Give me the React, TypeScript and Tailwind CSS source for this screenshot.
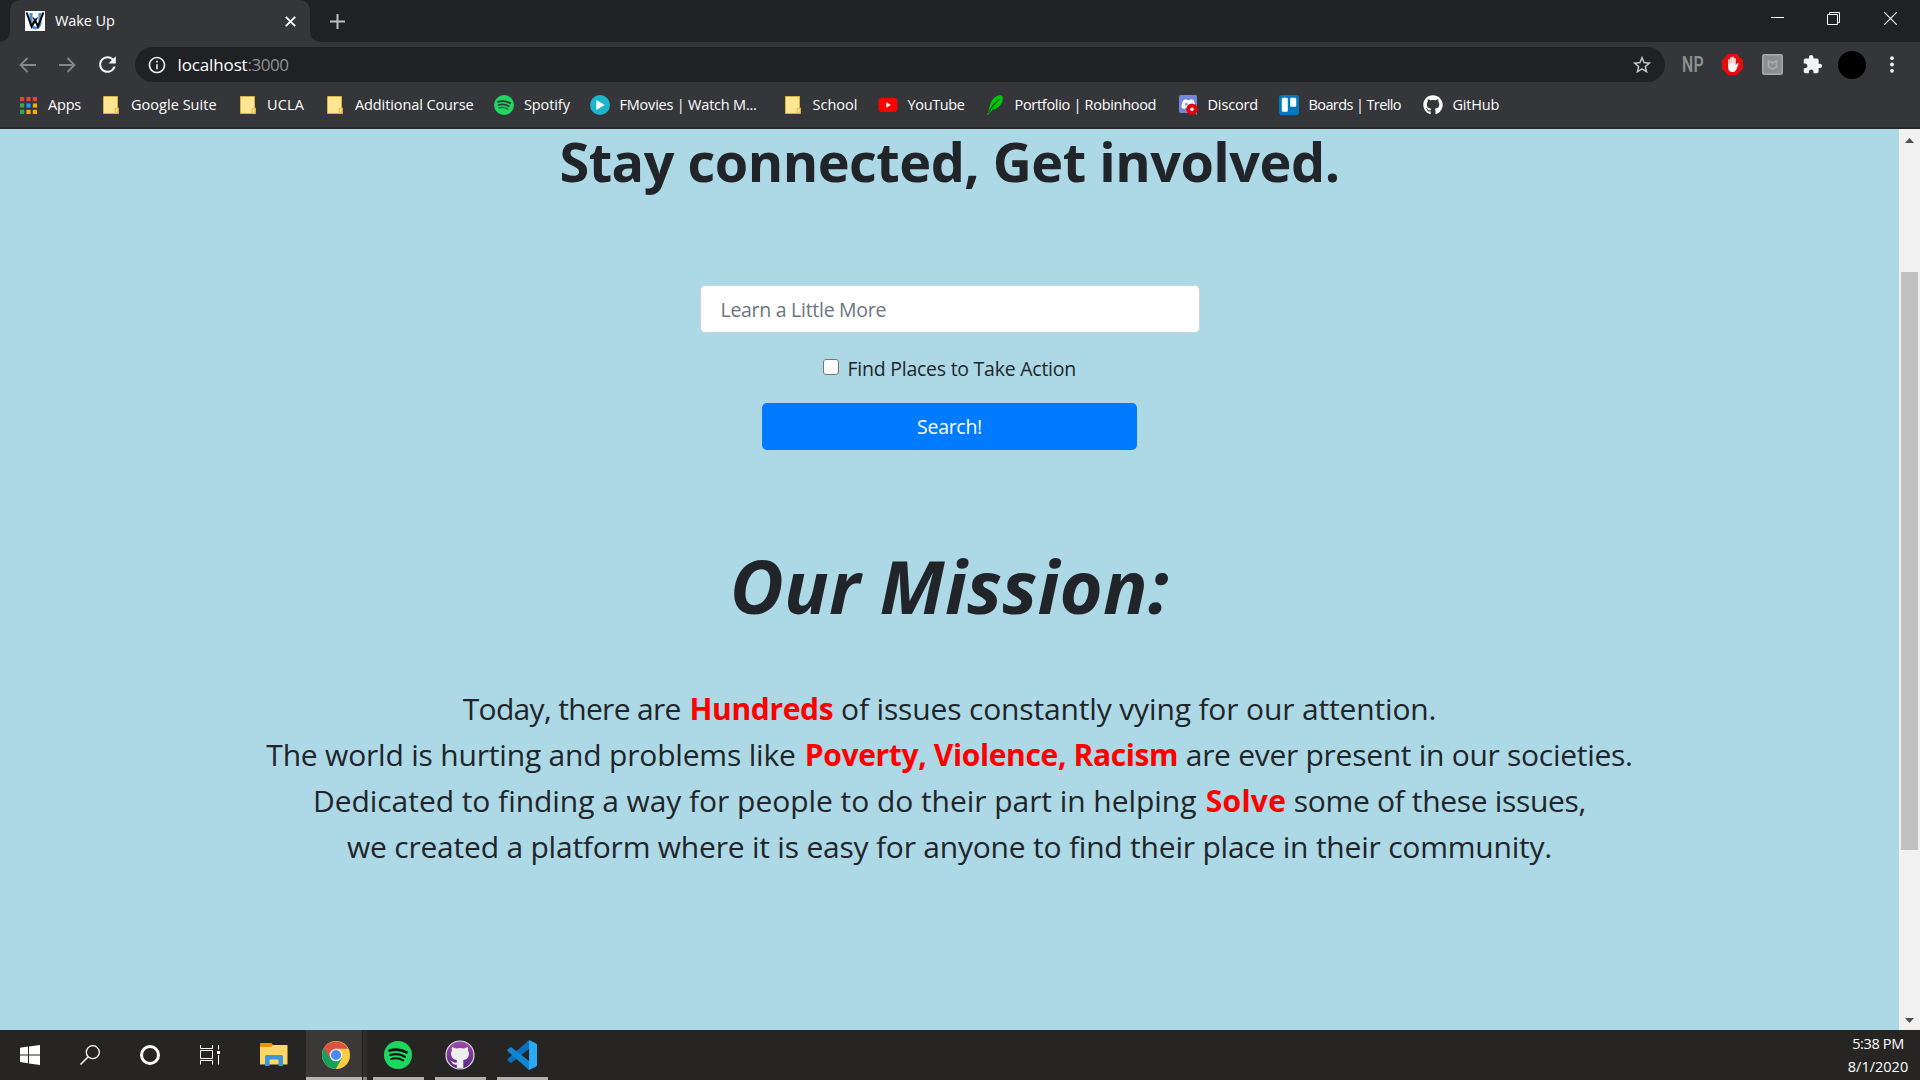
import React from 'react';
import { FaGithub } from 'react-icons/fa';
import { MdExtension, MdInfoOutline, MdRefresh, MdStarBorder } from 'react-icons/md';

function FolderIcon() {
  return (
    <svg width="16" height="18" viewBox="0 0 16 18">
      <path d="M.5.5h14v11.5h1v5.5H.5z" fill="#ffe693" stroke="#d9b23e" />
      <path d="M12.2 17.2v-4.4l2.8-1v5.4z" fill="#ffe693" stroke="#d9b23e" strokeWidth=".9" />
    </svg>
  );
}

function AppsIcon() {
  const colors = ['#ea4335', '#ea4335', '#ea4335', '#34a853', '#2196f3', '#f9ab00', '#34a853', '#f9ab00', '#f9ab00'];
  return (
    <svg width="17" height="17" viewBox="0 0 17 17">
      {colors.map((c, i) => (
        <rect key={i} x={(i % 3) * 6.4} y={Math.floor(i / 3) * 6.4} width="4.2" height="4.2" fill={c} />
      ))}
    </svg>
  );
}

function SpotifyIcon({ size, ink }: { size: number; ink: string }) {
  return (
    <svg width={size} height={size} viewBox="0 0 28 28">
      <circle cx="14" cy="14" r="14" fill="#1ed760" />
      <g fill="none" stroke={ink} strokeLinecap="round">
        <path d="M5.6 9.6c5.4-1.6 12-1.1 17 1.8" strokeWidth="2.6" />
        <path d="M6.4 14c4.8-1.4 10.3-.8 14.5 1.7" strokeWidth="2.2" />
        <path d="M7.1 18c4-1.2 8.7-.7 12.2 1.5" strokeWidth="1.8" />
      </g>
    </svg>
  );
}

function PlayIcon() {
  return (
    <svg width="20" height="20" viewBox="0 0 20 20">
      <circle cx="10" cy="10" r="10" fill="#1cb5cc" />
      <path d="M6.3 5v10l8.4-5z" fill="#fff" />
    </svg>
  );
}

function YouTubeIcon() {
  return (
    <svg width="20" height="14" viewBox="0 0 20 14">
      <rect x=".5" width="19" height="14" rx="3.4" fill="#f00" />
      <path d="M8.3 4.3v5.4L12.8 7z" fill="#fff" />
    </svg>
  );
}

function LeafIcon() {
  return (
    <svg width="17" height="20" viewBox="0 0 17 20">
      <path d="M2.500 12.500C3 8 5.500 3.500 9.500 1.200 11.500.1 14 0 15.300.9c.8 1.600.6 4.600-.8 7.100-1.700 3.500-4.500 5.700-9 6.700L1.200 19.800l-.9-.1z" fill="#00c805" />
      <path d="M1.500 18C4.500 12 8 7.500 12.500 4.300" stroke="#1f4f2a" strokeWidth="1.300" fill="none" />
    </svg>
  );
}

function DiscordIcon() {
  return (
    <svg width="20" height="20" viewBox="0 0 20 20">
      <path d="M2 0h14.500A1.500 1.500 0 0 1 18 1.500V20l-3-2H2a2 2 0 0 1-2-2V2a2 2 0 0 1 2-2z" fill="#7289da" />
      <path d="M4.500 5.200C6 4.300 7 4.200 7.600 4.200l.4.7h3l.4-.7c1.100.1 2.200.4 3.200 1.100 1.200 2.300 1.700 4.700 1.600 7.300-1.200 1.100-2.300 1.400-3.400 1.400l-.7-1H6.400l-.7 1c-1.300-.1-2.400-.6-3.300-1.400 0-2.600.6-5.100 2.100-7.400z" fill="#fff" />
      <circle cx="7.200" cy="9.200" r="1.200" fill="#7289da" />
      <circle cx="13" cy="14.200" r="5.800" fill="#e30613" />
      <circle cx="13" cy="14.200" r="1.700" fill="#fff" />
    </svg>
  );
}

function TrelloIcon() {
  return (
    <svg width="20" height="20" viewBox="0 0 20 20">
      <rect width="20" height="20" rx="2.8" fill="#0079bf" />
      <rect x="2.8" y="2.8" width="6" height="14" rx="1.2" fill="#fff" />
      <rect x="11.2" y="2.8" width="6" height="9" rx="1.2" fill="#fff" />
    </svg>
  );
}

function Favicon() {
  return (
    <svg width="20" height="20" viewBox="0 0 20 20">
      <path d="M0 0h20v20H0z" fill="#fff" />
      <path d="M6 2v10a4.500 5 0 0 0 9 0V2" fill="none" stroke="#4a8fd0" strokeWidth="3.200" />
      <path d="M1.600 1.500l5 14L10 9l3 6.500 5.400-14" fill="none" stroke="#0a0a0a" strokeWidth="2" />
      <path d="M8 6.500l5 8M12.500 6.500l-5 8" stroke="#0a0a0a" strokeWidth="1.200" />
    </svg>
  );
}

const bookmarks: { label: string; icon: React.ReactNode; box: string; pad: string; track: string }[] = [
  { label: 'Apps', icon: <AppsIcon />, box: 'w-[83px]', pad: 'w-[28px]', track: 'tracking-[-0.2px]' },
  { label: 'Google Suite', icon: <FolderIcon />, box: 'w-[137px]', pad: 'w-[28px]', track: 'tracking-[0.03px]' },
  { label: 'UCLA', icon: <FolderIcon />, box: 'w-[87px]', pad: 'w-[27px]', track: 'tracking-[0.15px]' },
  { label: 'Additional Course', icon: <FolderIcon />, box: 'w-[167px]', pad: 'w-[28px]', track: 'tracking-[-0.1px]' },
  { label: 'Spotify', icon: <SpotifyIcon size={20} ink="#35363a" />, box: 'w-[96px]', pad: 'w-[30px]', track: 'tracking-[-0.1px]' },
  { label: 'FMovies | Watch M...', icon: <PlayIcon />, box: 'w-[195px]', pad: 'w-[29.5px]', track: 'tracking-[-0.21px]' },
  { label: 'School', icon: <FolderIcon />, box: 'w-[93px]', pad: 'w-[27.5px]', track: 'tracking-[0.02px]' },
  { label: 'YouTube', icon: <YouTubeIcon />, box: 'w-[109px]', pad: 'w-[29.5px]', track: 'tracking-[-0.35px]' },
  { label: 'Portfolio | Robinhood', icon: <LeafIcon />, box: 'w-[192px]', pad: 'w-[27.5px]', track: 'tracking-[-0.3px]' },
  { label: 'Discord', icon: <DiscordIcon />, box: 'w-[100px]', pad: 'w-[28.5px]', track: 'tracking-[-0.15px]' },
  { label: 'Boards | Trello', icon: <TrelloIcon />, box: 'w-[144px]', pad: 'w-[29.5px]', track: 'tracking-[-0.6px]' },
  { label: 'GitHub', icon: <FaGithub size={20} color="#fff" />, box: 'w-[90px]', pad: 'w-[29.5px]', track: 'tracking-[-0.2px]' },
];

function TabStrip() {
  return (
    <div className="flex h-[42px] bg-[#202124]">
      <div className="flex w-[10px] items-end bg-[#35363a]">
        <div className="h-[42px] w-[10px] rounded-br-[10px] bg-[#202124]" />
      </div>
      <div className="flex w-[300px] items-center rounded-t-[10px] bg-[#35363a] pr-[14px] pl-[15px]">
        <Favicon />
        <span className="ml-[10px] flex-1 text-[14.5px] tracking-[-0.1px] text-white">Wake Up</span>
        <svg width="11" height="11" viewBox="0 0 11 11">
          <path d="M.8.8l9.400 9.400M10.200.8L.8 10.200" stroke="#fff" strokeWidth="1.900" />
        </svg>
      </div>
      <div className="flex w-[10px] items-end bg-[#35363a]">
        <div className="h-[42px] w-[10px] rounded-bl-[10px] bg-[#202124]" />
      </div>
      <div className="flex flex-1 items-center pl-[10px]">
        <svg width="15" height="15" viewBox="0 0 15 15">
          <path d="M7.5 0v15M0 7.5h15" stroke="#bfc0c3" strokeWidth="2" />
        </svg>
      </div>
      <div className="flex">
        <div className="flex w-[57px] justify-center pt-[17px]">
          <div className="h-px w-[13px] bg-white" />
        </div>
        <div className="flex w-[55px] justify-center pt-[12px]">
          <svg width="13" height="13" viewBox="0 0 13 13" fill="none" stroke="#fff">
            <path d="M.5 2.5h10v10H.5zM2.5 2.5v-2h10v10h-2" />
          </svg>
        </div>
        <div className="flex w-[59px] justify-center pt-[12px]">
          <svg width="13" height="13" viewBox="0 0 13 13" fill="none" stroke="#fff" strokeWidth="1.1">
            <path d="M.3.3l12.4 12.4M12.7.3L.3 12.7" />
          </svg>
        </div>
      </div>
    </div>
  );
}

function Toolbar() {
  return (
    <div className="flex h-[45px] items-center bg-[#35363a]">
      <div className="flex w-[135px] items-center pl-[19px]">
        <svg width="17" height="16" viewBox="0 0 17 16" fill="none" stroke="#86878a" strokeWidth="1.8">
          <path d="M17 8H2M8.5 1L1.5 8l7 7" />
        </svg>
        <svg className="ml-[23px]" width="17" height="16" viewBox="0 0 17 16" fill="none" stroke="#86878a" strokeWidth="1.8">
          <path d="M0 8h15M8.5 1l7 7-7 7" />
        </svg>
        <MdRefresh className="ml-[19px]" size={25} color="#f1f3f4" />
      </div>
      <div className="flex h-[35px] w-[1530px] items-center rounded-full bg-[#202124] pr-[12px] pl-[12px]">
        <MdInfoOutline size={20} color="#e8eaed" />
        <span className="ml-[10.5px] flex-1 text-[17px] text-white">
          <span className="tracking-[-0.13px]">localhost</span>
          <span className="tracking-[-0.5px] text-[#8e9195]">:3000</span>
        </span>
        <MdStarBorder size={22} color="#c9cacd" />
      </div>
      <div className="flex flex-1 items-center pl-[16.5px]">
        <span className="w-[20px] origin-left scale-x-[0.72] font-['Roboto'] text-[22px] leading-none font-semibold tracking-[0.5px] text-[#8d8e90]">NP</span>
        <svg className="ml-[20px]" width="21" height="21" viewBox="0 0 21 21">
          <path d="M6.2 0h8.6L21 6.2v8.6L14.8 21H6.2L0 14.8V6.2z" fill="#e40d0d" />
          <path d="M6.2 5.500q.8-.8 1.400.1v4.200h.5V3.500q.8-1 1.600 0v6h.4V3q.9-1 1.700 0v6.700h.4V4.400q.8-.9 1.500 0v7l1.300-2q1-.8 1.700.2l-2.400 5.800q-1 2.600-3.600 2.600c-3 0-4.500-1.500-4.500-4.500z" fill="#fff" />
        </svg>
        <svg className="ml-[19px]" width="21" height="21" viewBox="0 0 21 21">
          <rect x=".8" y=".8" width="19.4" height="19.4" rx="1.5" fill="#8c8d8f" stroke="#a7adb1" strokeWidth="1.5" />
          <path d="M6.500 7l4 1.800 4-1.800v6l-4 2-4-2z" fill="none" stroke="#a3acb4" strokeWidth="1.700" />
        </svg>
        <MdExtension className="ml-[19px]" size={21} color="#f1f3f4" />
        <div className="ml-[15px] h-[28px] w-[28px] rounded-full bg-black" />
        <svg className="ml-[24px]" width="4" height="17" viewBox="0 0 4 17" fill="#f1f3f4">
          <circle cx="2" cy="2.2" r="1.9" />
          <circle cx="2" cy="8.5" r="1.9" />
          <circle cx="2" cy="14.8" r="1.9" />
        </svg>
      </div>
    </div>
  );
}

function BookmarksBar() {
  return (
    <div className="h-[42px] border-b-2 border-[#28292b] bg-[#35363a] pl-[20px]">
      <div className="flex h-[36px] items-center">
        {bookmarks.map((b) => (
          <div key={b.label} className={`flex shrink-0 items-center ${b.box}`}>
            <span className={`flex shrink-0 ${b.pad}`}>{b.icon}</span>
            <span className={`text-[14.5px] leading-[20px] whitespace-nowrap text-white ${b.track}`}>{b.label}</span>
          </div>
        ))}
      </div>
    </div>
  );
}

function Red({ children, track }: { children: React.ReactNode; track: string }) {
  return <strong className={`ml-[1.5px] font-bold text-[#ff0000] ${track}`}>{children}</strong>;
}

function Page() {
  return (
    <main className="flex flex-1 flex-col items-center bg-[#add8e6] text-[#212529]">
      <h1 className="text-[54px] leading-[64px] font-bold tracking-[-0.5px] whitespace-nowrap">Stay connected, Get involved.</h1>
      <input
        className="mt-[92px] h-[48px] w-[500px] rounded-[5px] border border-[#ced4da] bg-white pr-5 pl-[20px] text-[19.5px] tracking-[-0.28px] placeholder:text-[#6c757d]"
        placeholder="Learn a Little More"
      />
      <label className="mt-[21px] flex h-[30px] items-center text-[19.5px] leading-[30px] tracking-[-0.25px]">
        <span className="mt-[-4px] mr-[8.5px] h-[16px] w-[16px] rounded-[3px] border border-[#767676] bg-white" />
        Find Places to Take Action
      </label>
      <button className="mt-[19px] h-[47px] w-[375px] rounded-[5px] bg-[#007bff] text-[19.5px] tracking-[-0.3px] text-white">Search!</button>
      <h2 className="mt-[91px] text-[74px] leading-[90px] font-bold tracking-[0.17px] italic">Our Mission:</h2>
      <div className="mt-[55px] text-center text-[30px] leading-[46px] whitespace-nowrap">
        <p>
          <span className="tracking-[-0.67px]">Today, there are </span>
          <Red track="tracking-[-0.33px]">Hundreds</Red>
          <span className="tracking-[-0.15px]"> of issues constantly vying for our attention.</span>
        </p>
        <p>
          <span className="tracking-[-0.19px]">The world is hurting and problems like </span>
          <Red track="tracking-[-0.36px]">Poverty, Violence, Racism</Red>
          <span className="tracking-[-0.28px]"> are ever present in our societies.</span>
        </p>
        <p>
          <span className="tracking-[-0.05px]">Dedicated to finding a way for people to do their part in helping </span>
          <Red track="tracking-[0.3px]">Solve</Red>
          <span className="tracking-[-0.32px]"> some of these issues,</span>
        </p>
        <p className="tracking-[-0.21px]">we created a platform where it is easy for anyone to find their place in their community.</p>
      </div>
    </main>
  );
}

function Scrollbar() {
  return (
    <div className="flex w-[21px] flex-col items-center bg-[#f1f1f1]">
      <svg className="mt-[9px]" width="9" height="5" viewBox="0 0 9 5">
        <path d="M4.5 0L9 5H0z" fill="#505050" />
      </svg>
      <div className="mt-[129px] h-[578px] w-[17px] bg-[#c1c1c1]" />
      <svg className="mt-[168px]" width="9" height="5" viewBox="0 0 9 5">
        <path d="M0 0h9L4.5 5z" fill="#505050" />
      </svg>
    </div>
  );
}

function RunningApp({ children }: { children: React.ReactNode }) {
  return (
    <div className="flex w-[51px] flex-col items-center">
      <div className="flex h-[47px] items-center pt-[3px] pr-[2px]">{children}</div>
      <div className="h-[3px] w-full bg-[#b5b0af]" />
    </div>
  );
}

function Taskbar() {
  return (
    <div className="flex h-[50px] bg-[#262524]">
      <div className="flex w-[60px] items-center justify-center">
        <svg width="20" height="20" viewBox="0 0 20 20" fill="#fff">
          <path d="M0 2.8l8-1.2v7.8H0zM9 1.5L20 0v9.4H9zM0 10.4h8v7.8l-8-1.1zM9 10.4h11V20L9 18.4z" />
        </svg>
      </div>
      <div className="flex w-[60px] items-center justify-center">
        <svg width="20" height="20" viewBox="0 0 20 20" fill="none" stroke="#fff" strokeWidth="1.3">
          <circle cx="12.8" cy="7.2" r="6.5" />
          <path d="M8.2 11.8L.5 19.5" strokeWidth="1.5" />
        </svg>
      </div>
      <div className="flex w-[60px] items-center justify-center">
        <div className="h-[20px] w-[20px] rounded-full border-[3px] border-white" />
      </div>
      <div className="flex w-[60px] items-center justify-center">
        <svg width="20" height="20" viewBox="0 0 20 20" fill="none" stroke="#fff">
          <path d="M.5 0v3.5h12V0M.5 5.5h12v8H.5zM.5 19.5v-4h12v4M18.5 0v4.5M18.5 10v9.5" />
          <path d="M17 6h3v3h-3z" fill="#fff" stroke="none" />
        </svg>
      </div>
      <div className="flex w-[66px] items-center pl-[20px]">
        <svg width="28" height="24" viewBox="0 0 28 24">
          <path d="M1 0h10.5l1.5 2v5H0V1q0-1 1-1z" fill="#e09a00" />
          <path d="M0 4h11l2-2h14.5v19.5H0z" fill="#ffd764" />
          <path d="M5 23V13.5q0-1.500 1.500-1.500h15q1.500 0 1.500 1.500V23h-4.500v-6.500h-9V23z" fill="#3b97dd" />
        </svg>
      </div>
      <div className="flex w-[67px]">
        <div className="flex w-[56px] flex-col bg-[#3a3937]">
          <div className="flex h-[47px] items-center pt-[3px] pl-[16px]">
            <svg width="28" height="28" viewBox="0 0 28 28">
              <circle cx="14" cy="14" r="14" fill="#ffcd40" />
              <path d="M14 14L1.9 7A14 14 0 0 0 14 28l6-10.5z" fill="#17a05d" />
              <path d="M1.9 7A14 14 0 0 1 26.1 7.7H14L8 17.5z" fill="#dd5144" />
              <path d="M14 28l6.2-10.7H27.6A14 14 0 0 1 14 28z" fill="#ffcd40" />
              <circle cx="14" cy="14" r="6.3" fill="#f4f4f4" />
              <circle cx="14" cy="14" r="5.1" fill="#4c8bf5" />
            </svg>
          </div>
          <div className="h-[3px] bg-[#b9b4b3]" />
        </div>
        <div className="flex w-[5px] flex-col border-l border-[#1f1e1d] bg-[#302f2d]">
          <div className="mt-[47px] h-[3px] bg-[#8a8685]" />
        </div>
      </div>
      <div className="flex flex-1 gap-[11px]">
        <RunningApp>
          <SpotifyIcon size={28} ink="#111" />
        </RunningApp>
        <RunningApp>
          <svg width="30" height="30" viewBox="0 0 30 30">
            <defs>
              <linearGradient id="ghd" x1="0" y1="0" x2="0" y2="1">
                <stop offset="0" stopColor="#a54bb0" />
                <stop offset="1" stopColor="#54267d" />
              </linearGradient>
            </defs>
            <circle cx="15" cy="15" r="14" fill="url(#ghd)" stroke="#ddd" strokeWidth="1.2" />
            <path d="M7.3 7l3.7 1.5q4-1 8 0L22.7 7q.8 1.8.2 3.5c1 1.3 1.3 2.7 1 4.5-.5 3-2.6 4.6-5.6 5V28h-6.5v-3.5c-2.6.6-4-.3-4.8-2-.4-.8-.9-1.3-1.6-1.7 2.2-.4 2.7 2.6 6.4 1.7V20c-3-.4-5.2-2-5.7-5-.3-1.8 0-3.2 1-4.5-.6-1.7-.6-2.5.2-3.5z" fill="#eee" />
          </svg>
        </RunningApp>
        <RunningApp>
          <svg width="30" height="30" viewBox="0 0 30 30">
            <path d="M22 0L.8 18.8q-.8 1 0 2L3 22.5q.9.5 1.8 0L22 9z" fill="#0a6fb8" />
            <path d="M22 30L.8 11.2q-.8-1 0-2L3 7.5q.9-.5 1.8 0L22 21z" fill="#1286d3" />
            <path d="M22 0l6.8 3.2q1.2.6 1.2 1.8v20q0 1.2-1.2 1.8L22 30z" fill="#2aa9f4" />
          </svg>
        </RunningApp>
      </div>
      <div className="flex w-[84px] flex-col items-center pt-[2px] text-[14.5px] leading-[23px] text-white">
        <span className="tracking-[-0.36px]">5:38 PM</span>
        <span>8/1/2020</span>
      </div>
    </div>
  );
}

export default function App() {
  return (
    <div className="flex h-[1080px] w-[1920px] flex-col overflow-hidden font-['Open_Sans','Noto_Sans',sans-serif]">
      <TabStrip />
      <Toolbar />
      <BookmarksBar />
      <div className="flex flex-1">
        <Page />
        <Scrollbar />
      </div>
      <Taskbar />
    </div>
  );
}
